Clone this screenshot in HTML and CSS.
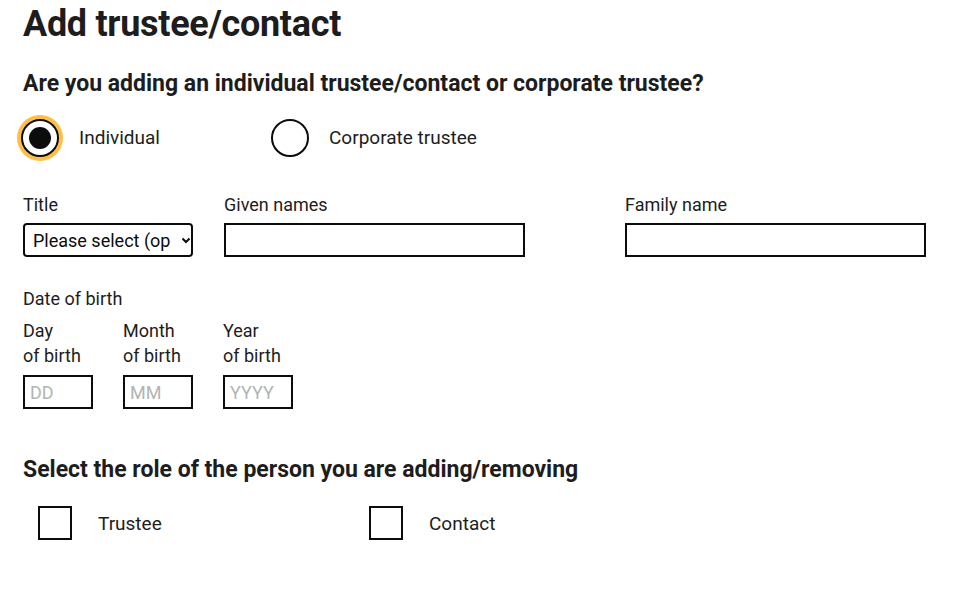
FILE: index.html
```html
<!DOCTYPE html>
<html lang="en">
<head>
<meta charset="utf-8">
<title>Add trustee/contact</title>
<link rel="stylesheet" href="styles.css">
</head>
<body>
<main class="page">
  <h1 class="title">Add trustee/contact</h1>
  <h2 class="question">Are you adding an individual trustee/contact or corporate trustee?</h2>
  <div class="radios">
    <label class="radio">
      <span class="radio-circle focused checked"></span>
      <span class="radio-label">Individual</span>
    </label>
    <label class="radio">
      <span class="radio-circle"></span>
      <span class="radio-label">Corporate trustee</span>
    </label>
  </div>

  <div class="names">
    <div class="field field-title">
      <div class="label">Title</div>
      <div class="select">
        <span class="select-text">Please select (op</span>
        <svg class="chev" width="10" height="7" viewBox="0 0 10 7"><path d="M1.5 1.5 L5 5 L8.5 1.5" fill="none" stroke="#0b0c0c" stroke-width="2"/></svg>
      </div>
    </div>
    <div class="field field-given">
      <div class="label">Given names</div>
      <div class="input wide"></div>
    </div>
    <div class="field field-family">
      <div class="label">Family name</div>
      <div class="input wide"></div>
    </div>
  </div>

  <div class="dob">
    <div class="label">Date of birth</div>
    <div class="dob-row">
      <div class="dob-item">
        <div class="label sub">Day<br>of birth</div>
        <div class="input small"><span class="ph">DD</span></div>
      </div>
      <div class="dob-item">
        <div class="label sub">Month<br>of birth</div>
        <div class="input small"><span class="ph">MM</span></div>
      </div>
      <div class="dob-item">
        <div class="label sub">Year<br>of birth</div>
        <div class="input small year"><span class="ph">YYYY</span></div>
      </div>
    </div>
  </div>

  <h2 class="role">Select the role of the person you are adding/removing</h2>
  <div class="checks">
    <label class="check">
      <span class="box"></span>
      <span class="check-label">Trustee</span>
    </label>
    <label class="check">
      <span class="box"></span>
      <span class="check-label">Contact</span>
    </label>
  </div>
</main>
</body>
</html>
```

FILE: styles.css
```css
* { box-sizing: border-box; }
html, body { margin: 0; padding: 0; background: #fff; }
body {
  font-family: Roboto, "Liberation Sans", Arial, sans-serif;
  color: #0b0c0c;
}
.page { padding: 4px 0 0 23px; }

.title {
  margin: 0;
  font-size: 36px;
  line-height: 40px;
  font-weight: 700;
  letter-spacing: -0.3px;
  color: #1d1d1d;
}
.question {
  margin: 25px 0 0;
  font-size: 23px;
  line-height: 30px;
  font-weight: 700;
  letter-spacing: 0;
  color: #1d1d1d;
}

.radios { display: flex; margin-top: 20px; margin-left: -2px; }
.radio { display: flex; align-items: center; width: 250px; }
.radio-circle {
  width: 38px; height: 38px;
  border: 2px solid #0b0c0c;
  border-radius: 50%;
  background: #fff;
  position: relative;
  flex: none;
}
.radio-circle.focused { box-shadow: 0 0 0 4px #ffbf47; }
.radio-circle.checked::after {
  content: "";
  position: absolute;
  left: 6px; top: 6px;
  width: 22px; height: 22px;
  border-radius: 50%;
  background: #0b0c0c;
}
.radio-label { margin-left: 20px; font-size: 19px; line-height: 24px; color: #1d1d1d; }

.names { display: flex; margin-top: 35px; }
.field-title { width: 201px; }
.field-given { width: 401px; }
.label { font-size: 18px; line-height: 25px; color: #1d1d1d; }
.field .label { margin-bottom: 6px; }

.select {
  width: 170px; height: 34px;
  border: 2px solid #0b0c0c;
  border-radius: 4px;
  display: flex; align-items: center;
  padding: 0 6px 0 8px;
  overflow: hidden;
  white-space: nowrap;
}
.select-text { font-size: 18px; width: 144px; overflow: hidden; flex: none; color: #0b0c0c; }
.chev { margin-left: 4px; flex: none; }

.input {
  height: 34px;
  border: 2px solid #0b0c0c;
  background: #fff;
  display: flex; align-items: center;
  padding: 0 5px;
}
.input.wide { width: 301px; }
.input.small { width: 70px; }
.ph { color: #b1b4b6; font-size: 18px; }

.dob { margin-top: 29px; }
.dob-row { display: flex; margin-top: 7px; }
.dob-item { width: 100px; }
.label.sub { margin-bottom: 7px; }

.role {
  margin: 47px 0 0;
  font-size: 23px;
  line-height: 28px;
  font-weight: 700;
  letter-spacing: 0;
  color: #1d1d1d;
}

.checks { display: flex; margin-top: 22px; padding-left: 15px; }
.check { display: flex; align-items: center; width: 331px; }
.box {
  width: 34px; height: 34px;
  border: 2px solid #0b0c0c;
  flex: none;
}
.check-label { margin-left: 26px; font-size: 19px; color: #1d1d1d; }
```
